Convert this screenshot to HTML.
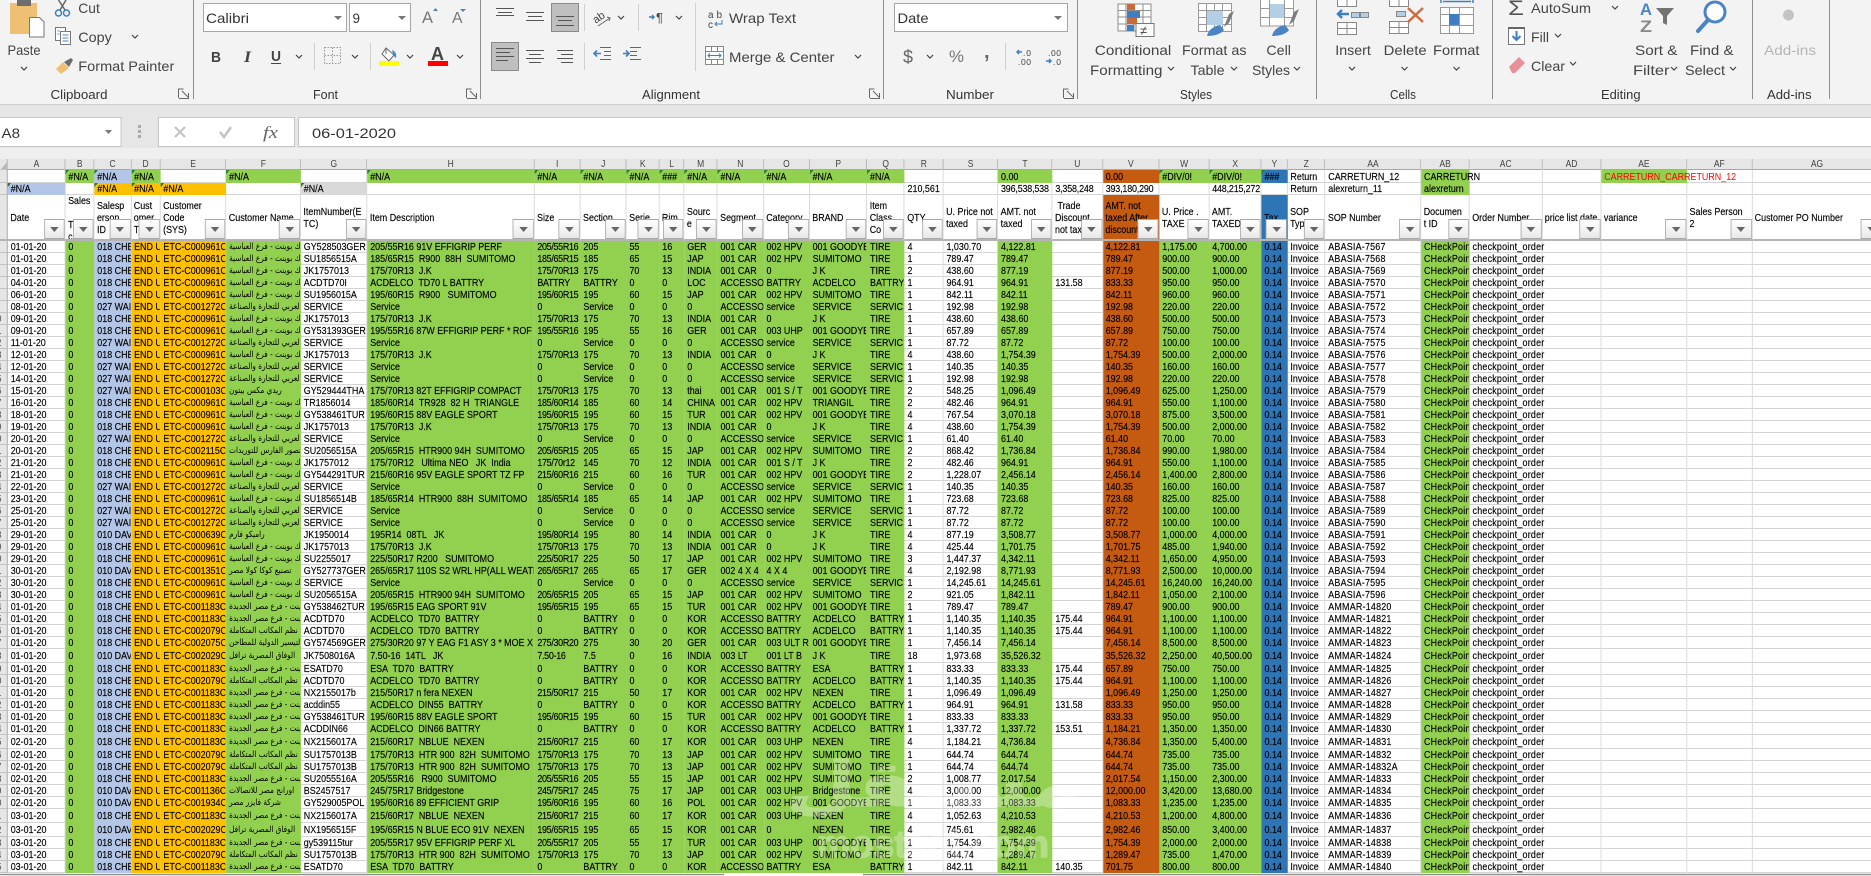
<!DOCTYPE html>
<html><head><meta charset="utf-8"><title>Sheet</title>
<style>
html,body{margin:0;padding:0;width:1871px;height:876px;overflow:hidden;background:#e6e6e6}
svg text{font-family:"Liberation Sans",sans-serif;font-size:14px;fill:#444}
svg .s{font-size:13px;fill:#333}
.rb{position:absolute;left:0;top:0}
.g{position:absolute;left:0;top:159px;transform:scaleX(.85);transform-origin:0 0}
table{border-collapse:separate;border-spacing:0;table-layout:fixed;width:2214.7px;font:10.5px/11px "Liberation Sans","DejaVu Sans",sans-serif;color:#000;background:#fff;-webkit-text-stroke:.15px #000}
td{padding:1px 0 0 3.2px;overflow:hidden;white-space:nowrap;height:12px;box-sizing:border-box;border-right:1px solid #d4d4d4;box-shadow:inset 0 -1px 0 #d4d4d4}
.c td{height:11px;background:#e6e6e6;text-align:center;padding:1px 0 0;color:#444;border-right:1px solid #b0b0b0;box-shadow:inset 0 -1px 0 #a8a8a8;line-height:10px;font-size:10px;-webkit-text-stroke:0}
.c td:first-child{background:linear-gradient(135deg,#e6e6e6 60%,#b5b5b5 60%)}
tr td:first-child{background:#e6e6e6;padding:1px 0 0;text-indent:-4px;color:#555;border-right:1px solid #a0a0a0;box-shadow:inset 0 -1px 0 #c4c4c4;-webkit-text-stroke:0}
.gr{background:#92d050;border-color:transparent;box-shadow:none}
.bl{background:#b4c6e7;border-color:transparent;box-shadow:none}
.am{background:#ffc000;border-color:transparent;box-shadow:none}
.gy{background:#d9d9d9;border-color:transparent;box-shadow:none}
.br{background:#c55a11;border-color:transparent;box-shadow:none}
.dk{background:#2e75b6;border-color:transparent;box-shadow:none}
.n{background-image:linear-gradient(135deg,#2f7d32 3px,transparent 3px);background-repeat:no-repeat}
.o{overflow:visible;position:relative;z-index:3}
.t{letter-spacing:-.2px}
.k td{height:46px;position:relative;padding:0 0 0 2.8px;border-bottom:2px solid #b4b4b4;vertical-align:top;box-shadow:none}
.k td:first-child{padding:0;box-shadow:none}
.x{height:44px;position:relative;top:1px;display:flex;align-items:center;overflow:hidden;line-height:12px;white-space:nowrap}
.tp{align-items:flex-start;top:0}
.f{position:absolute;right:0;bottom:0;width:24.7px;height:20px;box-sizing:border-box;border:1px solid #a8a8a8;background:linear-gradient(#fff,#e8e8e8)}
.f:after{content:"";position:absolute;left:6.5px;top:7px;border-left:5px solid transparent;border-right:5px solid transparent;border-top:5px solid #666}
.d td:nth-child(3),.d td:nth-child(7),.d td:nth-child(n+9):nth-child(-n+18),.d td:nth-child(21),.d td:nth-child(24),.d td:nth-child(25),.d td:nth-child(29){background:#92d050;border-color:transparent;box-shadow:none}
.d td:nth-child(4){background:#b4c6e7;border-color:transparent;box-shadow:none}
.d td:nth-child(5),.d td:nth-child(6){background:#ffc000;border-color:transparent;box-shadow:none}
.d td:nth-child(23){background:#c55a11;border-color:transparent;box-shadow:none}
.d td:nth-child(26){background:#2e75b6;border-color:transparent;box-shadow:none}
.d td:nth-child(7){font-size:8.6px;font-family:"DejaVu Sans",sans-serif;-webkit-text-stroke:0}
.d td:nth-child(10){letter-spacing:-.35px}
.d td:nth-child(28),.d td:nth-child(29),.d td:nth-child(30){letter-spacing:.25px}
.d td:nth-child(30){overflow:visible}
.bot{position:absolute;left:0;top:874px;width:1871px;height:2px;background:#e4e4e4;border-top:1px solid #8f8f8f;box-sizing:border-box}
.tab{position:absolute;left:724px;top:873px;width:139px;height:3px;background:#fff}
.wm{position:absolute;left:0;top:0;pointer-events:none;opacity:.3}
.wm text{fill:#fff;stroke:#fff;stroke-width:1.5px}
</style></head><body>
<svg class="rb" width="1871" height="159" viewBox="0 0 1871 159">
<rect width="1871" height="159" fill="#e6e6e6"/>
<rect width="1871" height="104" fill="#f3f3f3"/>
<rect y="104" width="1871" height="1" fill="#cfcfcf"/>
<rect y="148" width="1871" height="11" fill="#efefef"/>
<g fill="#fff" stroke="#c6c6c6"><rect x="-1" y="117.500" width="122" height="29"/><rect x="158.500" y="117.500" width="136" height="29"/><rect x="298.500" y="117.500" width="1580" height="29"/></g>
<path d="M105 130h7l-3.500 4z" fill="#777"/>
<g fill="#a8a8a8"><rect x="138" y="125" width="3" height="3"/><rect x="138" y="130" width="3" height="3"/><rect x="138" y="135" width="3" height="3"/></g>
<path d="M175 127l10 10m0-10l-10 10" stroke="#c4c4c4" stroke-width="2.200" fill="none"/>
<path d="M220 132l4 5 7-10" stroke="#c4c4c4" stroke-width="2.500" fill="none"/>
<text x="263" y="138" style="font-family:'Liberation Serif',serif;font-style:italic;font-size:17px;fill:#666" textLength="15" lengthAdjust="spacingAndGlyphs">fx</text>
<text x="1.500" y="138" textLength="18.500" lengthAdjust="spacingAndGlyphs" style="fill:#333">A8</text>
<text x="312" y="138" textLength="84" lengthAdjust="spacingAndGlyphs" style="fill:#333">06-01-2020</text>
<g stroke="#8e8e8e" fill="none"><path d="M193.500 0v99M480.500 0v99M883.500 0v99M1077.500 0v99M1316.500 0v99M1492.500 0v99M1752.500 0v99M1829.500 0v99"/></g>
<g stroke="#d0d0d0" fill="none"><path d="M314.500 43v27M370.500 43v27M584.500 4v27M584.500 43v27M638.500 4v27M695.500 3v68M1005.500 43v27"/></g>
<!-- paste -->
<rect x="10" y="3" width="27" height="31" fill="#efbf73"/><rect x="17" y="0" width="14" height="6" fill="#6d6d6d"/>
<path d="M29.500 17.500h10l4.500 4.500v15H29.500z" fill="#fff" stroke="#777"/>
<text x="7.500" y="55" textLength="33" lengthAdjust="spacingAndGlyphs">Paste</text>
<!-- cut -->
<g fill="none"><circle cx="58.500" cy="13" r="3" stroke="#3f7fc1" stroke-width="1.500"/><circle cx="66.500" cy="13" r="3" stroke="#3f7fc1" stroke-width="1.500"/><path d="M60 10L66 0M65 10L58.500 0" stroke="#666" stroke-width="1.500"/></g>
<text x="78.300" y="13" textLength="21.500" lengthAdjust="spacingAndGlyphs">Cut</text>
<!-- copy -->
<rect x="55.500" y="27.500" width="10" height="13" fill="#fff" stroke="#777"/><rect x="60.500" y="31.500" width="10" height="13" fill="#fff" stroke="#777"/>
<path d="M62.500 35h6M62.500 38h6M62.500 41h6M57.500 31h2M57.500 34h2" stroke="#4a84c4" fill="none"/>
<text x="78.300" y="42" textLength="33.500" lengthAdjust="spacingAndGlyphs">Copy</text>
<!-- brush -->
<path d="M56 69l7-7 6 6-8 6z" fill="#efbf73"/><path d="M64 62l7-4 2 2-4 7z" fill="#6d6d6d"/>
<text x="78.300" y="71" textLength="96" lengthAdjust="spacingAndGlyphs">Format Painter</text>
<text class="s" x="50.500" y="99" textLength="57" lengthAdjust="spacingAndGlyphs">Clipboard</text>
<!-- launchers -->
<g fill="none" stroke="#666"><path d="M178.500 98v-9h5M189 98.500h-10M182 91l6 6M188.500 93v5"/><path d="M466.500 98v-9h5M477 98.500h-10M470 91l6 6M476.500 93v5"/><path d="M869.500 98v-9h5M880 98.500h-10M873 91l6 6M879.500 93v5"/><path d="M1063.500 98v-9h5M1074 98.500h-10M1067 91l6 6M1073.500 93v5"/></g>
<!-- chevrons -->
<g fill="none" stroke="#444" stroke-width="1.200"><path d="M132 35l3 3 3-3M21 67l3 3 3-3M618 16l3 3 3-3M676 16l3 3 3-3M296 55l3 3 3-3M352 55l3 3 3-3M407 55l3 3 3-3M457 55l3 3 3-3M855 55l3 3 3-3M927 55l3 3 3-3M1168 67l3 3 3-3M1231 67l3 3 3-3M1294 67l3 3 3-3M1349 67l3 3 3-3M1401.500 67l3 3 3-3M1453.500 67l3 3 3-3M1612 6l3 3 3-3M1555 34l3 3 3-3M1570 62l3 3 3-3M1671 67l3 3 3-3M1730 67l3 3 3-3"/></g>
<!-- font -->
<g fill="#fff" stroke="#a6a6a6"><rect x="203.500" y="3.500" width="143" height="28"/><rect x="349.500" y="3.500" width="61" height="28"/><rect x="894.500" y="3.500" width="173" height="28"/></g>
<path d="M334 16h8l-4 4zM398 16h8l-4 4zM1054 16h8l-4 4z" fill="#777"/>
<text x="206" y="23" textLength="43" lengthAdjust="spacingAndGlyphs" style="fill:#333">Calibri</text>
<text x="352.500" y="23" textLength="7.500" lengthAdjust="spacingAndGlyphs" style="fill:#333">9</text>
<text x="422" y="23" style="font-size:17px;fill:#777" textLength="11" lengthAdjust="spacingAndGlyphs">A</text><path d="M433 11l2.500-3 2.500 3z" fill="#4a84c4"/>
<text x="452" y="23" style="font-size:16px;fill:#777" textLength="10.500" lengthAdjust="spacingAndGlyphs">A</text><path d="M460 9h6l-3 3z" fill="#4a84c4"/>
<text x="211" y="62" style="font-weight:bold;font-size:15px" textLength="10" lengthAdjust="spacingAndGlyphs">B</text>
<text x="244" y="62" style="font-family:'Liberation Serif',serif;font-style:italic;font-weight:bold;font-size:16px" textLength="7" lengthAdjust="spacingAndGlyphs">I</text>
<text x="271" y="61" style="font-weight:bold;font-size:15px" textLength="10" lengthAdjust="spacingAndGlyphs">U</text><rect x="271" y="63" width="10" height="1" fill="#444"/>
<path d="M324.500 47.500h16v16h-16zM332.500 47.500v16M324.500 55.500h16" stroke="#999" stroke-dasharray="1.500 1.500" fill="none"/>
<path d="M386 48l8 7-5 6-7-7zM386 48v6" fill="#fff" stroke="#666"/><path d="M392 50c3 1 5 4 4 8-2-1-3-4-4-8z" fill="#4a84c4"/><rect x="379" y="61" width="20" height="5" fill="#ff0"/>
<text x="431" y="60" style="font-size:18px;font-weight:bold" textLength="13" lengthAdjust="spacingAndGlyphs">A</text><rect x="428" y="61" width="20" height="5" fill="#f00"/>
<text class="s" x="313" y="99" textLength="25" lengthAdjust="spacingAndGlyphs">Font</text>
<!-- alignment -->
<rect x="551.500" y="3.500" width="27" height="28" fill="#bfbfbf" stroke="#8a8a8a"/><rect x="491.500" y="42.500" width="27" height="28" fill="#bfbfbf" stroke="#8a8a8a"/>
<path d="M496 8.500h18M498 12.500h14M496 15.500h18M526 12.500h18M528 16.500h14M526 20.500h18M556 16.500h18M558 20.500h14M556 25.500h18M496 48.500h18M496 52.500h14M496 56.500h18M496 60.500h12M526 50.500h18M529 54.500h12M526 58.500h18M529 62.500h12M557 50.500h16M561 54.500h12M557 58.500h16M561 62.500h12" stroke="#555" fill="none"/>
<text x="592" y="20" style="font-size:11px" transform="rotate(-35 600 16)">ab</text><path d="M598 26l12-8m-3-1l3 1-1 3" stroke="#666" fill="none"/>
<path d="M600 47.500h11M604 51.500h7M604 55.500h7M600 59.500h11M630 47.500h11M630 51.500h7M630 55.500h7M630 59.500h11" stroke="#666" fill="none"/>
<path d="M601 53.500h-7m3-3l-3 3 3 3M623 53.500h6m-3-3l3 3-3 3" stroke="#3f7fc1" stroke-width="1.600" fill="none"/>
<path d="M649 17h5m-2-2l2 2-2 2" stroke="#3f7fc1" stroke-width="1.500" fill="none"/>
<text x="656" y="22" style="font-size:13px">¶</text>
<text x="708" y="18" style="font-size:10px;fill:#444" textLength="14">ab</text><text x="708" y="28" style="font-size:10px;fill:#444">c</text><path d="M722 20v4h-7m2-2l-2 2 2 2" stroke="#3f7fc1" fill="none"/>
<text x="729" y="23" textLength="67" lengthAdjust="spacingAndGlyphs">Wrap Text</text>
<path d="M705.500 46.500h18v18h-18zM705.500 51.500h18M705.500 59.500h18M711.500 46.500v5M717.500 46.500v5M711.500 59.500v5M717.500 59.500v5" stroke="#888" fill="#fff"/><path d="M708 55.500h13m-11-2l-2 2 2 2m9-4l2 2-2 2" stroke="#3f7fc1" fill="none"/>
<text x="729" y="62" textLength="105.500" lengthAdjust="spacingAndGlyphs">Merge &amp; Center</text>
<text class="s" x="642" y="99" textLength="58" lengthAdjust="spacingAndGlyphs">Alignment</text>
<!-- number -->
<text x="897.500" y="23" textLength="31" lengthAdjust="spacingAndGlyphs" style="fill:#333">Date</text>
<text x="903" y="63" style="font-size:18px;fill:#666" textLength="10" lengthAdjust="spacingAndGlyphs">$</text>
<text x="949" y="62" style="font-size:17px;fill:#777" textLength="15" lengthAdjust="spacingAndGlyphs">%</text>
<text x="984" y="58" style="font-size:20px;font-weight:bold;fill:#666">,</text>
<text x="1023" y="56" style="font-size:8.500px" textLength="8">.0</text><text x="1018" y="65" style="font-size:8.500px" textLength="13">.00</text><path d="M1022 52h-5m2-2l-2 2 2 2" stroke="#3f7fc1" stroke-width="1.500" fill="none"/>
<text x="1048" y="56" style="font-size:8.500px" textLength="13">.00</text><text x="1053" y="65" style="font-size:8.500px" textLength="8">.0</text><path d="M1046 61h5m-2-2l2 2-2 2" stroke="#3f7fc1" stroke-width="1.500" fill="none"/>
<text class="s" x="946" y="99" textLength="48" lengthAdjust="spacingAndGlyphs">Number</text>
<!-- cond fmt -->
<path d="M1118 4h33v27h-33zM1118 10.500h33M1118 17h33M1118 24h33M1126 4v27M1134 4v27M1143 4v27" stroke="#8e8e8e" fill="#fff"/>
<rect x="1127" y="4" width="8" height="6" fill="#c86a3a"/><rect x="1127" y="11" width="13" height="7" fill="#3f7fc1"/><rect x="1127" y="18" width="10" height="6" fill="#c86a3a"/><rect x="1127" y="25" width="7" height="6" fill="#3f7fc1"/>
<rect x="1136" y="23.500" width="18" height="13" fill="#fff" stroke="#777"/><text x="1140" y="35" style="font-size:13px">≠</text>
<text x="1094.800" y="55" textLength="76.500" lengthAdjust="spacingAndGlyphs">Conditional</text>
<text x="1090" y="75" textLength="72.500" lengthAdjust="spacingAndGlyphs">Formatting</text>
<!-- fmt table -->
<path d="M1198.500 3.500h33v28h-33zM1198.500 10.500h33M1198.500 17.500h33M1198.500 24.500h33M1206.500 3.500v28M1214.500 3.500v28M1222.500 3.500v28" stroke="#9a9a9a" fill="#fff"/>
<rect x="1207" y="11" width="16" height="14" fill="#b3cfe6"/>
<path d="M1229 14l5-3-5 12-5 4z" fill="#7d7d7d"/><path d="M1207 36c1-6 7-10 13-11l4 5c-3 4-9 6-17 6z" fill="#4a84c4"/>
<text x="1182" y="55" textLength="64.500" lengthAdjust="spacingAndGlyphs">Format as</text>
<text x="1190.500" y="75" textLength="34" lengthAdjust="spacingAndGlyphs">Table</text>
<!-- cell styles -->
<path d="M1260.500 0v26h33v-26M1260.500 8.500h33M1260.500 17.500h33M1269.500 0v26M1284.500 0v26" stroke="#9a9a9a" fill="#fff"/>
<rect x="1270" y="4" width="14" height="14" fill="#b3cfe6"/>
<path d="M1294 12l5-3-5 12-5 4z" fill="#7d7d7d"/><path d="M1272 36c1-6 7-10 13-11l4 5c-3 4-9 6-17 6z" fill="#4a84c4"/>
<text x="1266.400" y="55" textLength="24.500" lengthAdjust="spacingAndGlyphs">Cell</text>
<text x="1252" y="75" textLength="38" lengthAdjust="spacingAndGlyphs">Styles</text>
<text class="s" x="1180" y="99" textLength="32" lengthAdjust="spacingAndGlyphs">Styles</text>
<!-- insert -->
<path d="M1337.500 0v6.500h19v-6.500M1347 0v6.500M1337.500 22.500h19v12h-19zM1337.500 28.500h19M1347 22.500v12" stroke="#888" fill="#fff"/>
<path d="M1349 14h-11m4-4l-4 4 4 4" stroke="#3f7fc1" stroke-width="2.500" fill="none"/>
<rect x="1351.500" y="12.500" width="8" height="5" fill="#b3cfe6" stroke="#888"/><rect x="1360.500" y="12.500" width="8" height="5" fill="#b3cfe6" stroke="#888"/>
<text x="1335.300" y="55" textLength="35.500" lengthAdjust="spacingAndGlyphs">Insert</text>
<!-- delete -->
<path d="M1389.500 0v6.500h19v-6.500M1399 0v6.500M1389.500 21.500h19v12h-19zM1389.500 27.500h19M1399 21.500v12" stroke="#888" fill="#fff"/>
<rect x="1396.500" y="11.500" width="9" height="5" fill="#b3cfe6" stroke="#888"/>
<path d="M1408 8l15 14m0-14l-15 14" stroke="#d06a3a" stroke-width="2.400" fill="none"/>
<text x="1383.700" y="55" textLength="43" lengthAdjust="spacingAndGlyphs">Delete</text>
<!-- format -->
<path d="M1441 3v-3M1473 3v-3M1443 1.500h28" stroke="#3f7fc1" stroke-width="1.500" fill="none"/>
<path d="M1440.500 7.500h33v26h-33zM1440.500 14.500h33M1440.500 25.500h33M1449.500 7.500v26M1459.500 7.500v26" stroke="#999" fill="#fff"/>
<rect x="1449" y="14" width="10" height="11" fill="#3f7fc1"/>
<text x="1433" y="55" textLength="46.500" lengthAdjust="spacingAndGlyphs">Format</text>
<text class="s" x="1390" y="99" textLength="26" lengthAdjust="spacingAndGlyphs">Cells</text>
<!-- editing -->
<text x="1508" y="15" style="font-size:21px;fill:#555" textLength="16" lengthAdjust="spacingAndGlyphs">Σ</text>
<text x="1531" y="13" textLength="60" lengthAdjust="spacingAndGlyphs">AutoSum</text>
<rect x="1508.500" y="27.500" width="16" height="17" fill="#fff" stroke="#777"/><path d="M1516.500 31v9m-4-4l4 4 4-4" stroke="#3f7fc1" stroke-width="2" fill="none"/><rect x="1508" y="27" width="17" height="2" fill="#666"/>
<text x="1531" y="42" textLength="18" lengthAdjust="spacingAndGlyphs">Fill</text>
<path d="M1509 67l10-10 6 6-10 10h-3z" fill="#e8909a"/>
<text x="1531" y="71" textLength="34" lengthAdjust="spacingAndGlyphs">Clear</text>
<text x="1640" y="15" style="font-size:17px;fill:#4a84c4;font-weight:bold" textLength="12" lengthAdjust="spacingAndGlyphs">A</text>
<text x="1640" y="32" style="font-size:17px;fill:#8a8a8a;font-weight:bold" textLength="12" lengthAdjust="spacingAndGlyphs">Z</text>
<path d="M1656 8h18l-7 8v9l-4-2v-7z" fill="#737373"/>
<text x="1635" y="55" textLength="42.500" lengthAdjust="spacingAndGlyphs">Sort &amp;</text>
<text x="1633" y="75" textLength="36.500" lengthAdjust="spacingAndGlyphs">Filter</text>
<circle cx="1715" cy="12" r="10" fill="#fff" stroke="#4a84c4" stroke-width="3"/><path d="M1708 20l-10 11" stroke="#4a84c4" stroke-width="4" stroke-linecap="round"/>
<text x="1690" y="55" textLength="43.500" lengthAdjust="spacingAndGlyphs">Find &amp;</text>
<text x="1685" y="75" textLength="40" lengthAdjust="spacingAndGlyphs">Select</text>
<text class="s" x="1601" y="99" textLength="39.500" lengthAdjust="spacingAndGlyphs">Editing</text>
<circle cx="1788.500" cy="15" r="5.500" fill="#c4c4c4"/>
<text x="1764" y="55" textLength="52" lengthAdjust="spacingAndGlyphs" style="fill:#b5b5b5">Add-ins</text>
<text class="s" x="1767" y="99" textLength="44.500" lengthAdjust="spacingAndGlyphs">Add-ins</text>
</svg>
<div class="g"><table>
<colgroup><col style="width:9.4px"><col style="width:67.9px"><col style="width:34px"><col style="width:43.3px"><col style="width:34.5px"><col style="width:77.3px"><col style="width:87.8px"><col style="width:78.2px"><col style="width:196.6px"><col style="width:54.2px"><col style="width:54.2px"><col style="width:38.6px"><col style="width:29.4px"><col style="width:39.1px"><col style="width:54.2px"><col style="width:54.2px"><col style="width:67.6px"><col style="width:44.1px"><col style="width:45.8px"><col style="width:64.2px"><col style="width:63.9px"><col style="width:59.3px"><col style="width:66.5px"><col style="width:58.8px"><col style="width:61.5px"><col style="width:30.5px"><col style="width:44.5px"><col style="width:112.7px"><col style="width:57.1px"><col style="width:85.4px"><col style="width:69.5px"><col style="width:100.8px"><col style="width:76.6px"><col style="width:153px"></colgroup>
<tbody class="c"><tr><td><td>A<td>B<td>C<td>D<td>E<td>F<td>G<td>H<td>I<td>J<td>K<td>L<td>M<td>N<td>O<td>P<td>Q<td>R<td>S<td>T<td>U<td>V<td>W<td>X<td>Y<td>Z<td>AA<td>AB<td>AC<td>AD<td>AE<td>AF<td>AG</tbody>
<tbody>
<tr style="height:13px"><td><td><td class="gr n">#N/A<td class="bl n">#N/A<td class="gr n">#N/A<td><td class="gr n">#N/A<td><td class="gr n">#N/A<td class="gr n">#N/A<td class="gr n">#N/A<td class="gr n">#N/A<td class="gr n">###<td class="gr n">#N/A<td class="gr n">#N/A<td class="gr n">#N/A<td class="gr n">#N/A<td class="gr n">#N/A<td><td><td class="gr">0.00<td><td class="br">0.00<td class="gr n">#DIV/0!<td class="gr n">#DIV/0!<td class="dk n">###<td>Return<td>CARRETURN_12<td class="gr o">CARRETURN<td><td><td class="gr o" style="color:#f00;-webkit-text-stroke:0">CARRETURN_CARRETURN_12<td><td>
<tr><td><td class="bl n">#N/A<td><td class="am n">#N/A<td class="am n">#N/A<td class="am n">#N/A<td><td class="gy n">#N/A<td><td><td><td><td><td><td><td><td><td><td>210,561<td><td class="t">396,538,538<td class="t">3,358,248<td class="t">393,180,290<td><td class="t">448,215,272<td><td>Return<td>alexreturn_11<td class="gr">alexreturn<td><td><td><td><td>
</tbody>
<tbody class="k"><tr><td><td><div class="x">Date</div><i class="f"></i><td><div class="x tp">Sales<br><br>T<br>c</div><i class="f"></i><td><div class="x">Salesp<br>erson<br>ID</div><i class="f"></i><td><div class="x">Cust<br>omer<br>T</div><i class="f"></i><td><div class="x">Customer<br>Code<br> (SYS)</div><i class="f"></i><td><div class="x">Customer Name</div><i class="f"></i><td><div class="x">ItemNumber(E<br>TC)</div><i class="f"></i><td><div class="x">Item Description</div><i class="f"></i><td><div class="x">Size</div><i class="f"></i><td><div class="x">Section</div><i class="f"></i><td><div class="x">Serie</div><i class="f"></i><td><div class="x">Rim</div><i class="f"></i><td><div class="x">Sourc<br>e</div><i class="f"></i><td><div class="x">Segment</div><i class="f"></i><td><div class="x">Category</div><i class="f"></i><td><div class="x">BRAND</div><i class="f"></i><td><div class="x">Item<br>Class<br>Co</div><i class="f"></i><td><div class="x">QTY</div><i class="f"></i><td><div class="x">U. Price not<br>taxed</div><i class="f"></i><td><div class="x">AMT. not<br>taxed</div><i class="f"></i><td><div class="x">&nbsp;Trade<br>Discount<br>not tax</div><i class="f"></i><td class="br"><div class="x">AMT. not<br>taxed After<br>discount</div><i class="f"></i><td><div class="x">U. Price .<br>TAXE</div><i class="f"></i><td><div class="x">AMT.<br>TAXED</div><i class="f"></i><td class="dk"><div class="x">Tax</div><i class="f"></i><td><div class="x">SOP<br>Typ</div><i class="f"></i><td><div class="x">SOP Number</div><i class="f"></i><td><div class="x">Documen<br>t ID</div><i class="f"></i><td><div class="x">Order Number</div><i class="f"></i><td><div class="x">price list date</div><i class="f"></i><td><div class="x">variance</div><i class="f"></i><td><div class="x">Sales Person<br>2</div><i class="f"></i><td><div class="x">Customer PO Number</div><i class="f"></i></tbody>
<tbody class="d">
<tr><td><td>01-01-20<td>0<td>018 CHECK<td>END USER<td>ETC-C000961C<td>تشيك بوينت - فرع العباسية<td>GY528503GER<td>205/55R16 91V EFFIGRIP PERF<td>205/55R16<td>205<td>55<td>16<td>GER<td>001 CAR<td>002 HPV<td>001 GOODYEAR<td>TIRE<td>4<td>1,030.70<td>4,122.81<td><td>4,122.81<td>1,175.00<td>4,700.00<td>0.14<td>Invoice<td>ABASIA-7567<td>CHeckPoint<td>checkpoint_order<td><td><td><td>
<tr><td><td>01-01-20<td>0<td>018 CHECK<td>END USER<td>ETC-C000961C<td>تشيك بوينت - فرع العباسية<td>SU1856515A<td>185/65R15 &nbsp;R900 &nbsp;88H &nbsp;SUMITOMO<td>185/65R15<td>185<td>65<td>15<td>JAP<td>001 CAR<td>002 HPV<td>SUMITOMO<td>TIRE<td>1<td>789.47<td>789.47<td><td>789.47<td>900.00<td>900.00<td>0.14<td>Invoice<td>ABASIA-7568<td>CHeckPoint<td>checkpoint_order<td><td><td><td>
<tr><td><td>01-01-20<td>0<td>018 CHECK<td>END USER<td>ETC-C000961C<td>تشيك بوينت - فرع العباسية<td>JK1757013<td>175/70R13 &nbsp;J.K<td>175/70R13<td>175<td>70<td>13<td>INDIA<td>001 CAR<td>0<td>J K<td>TIRE<td>2<td>438.60<td>877.19<td><td>877.19<td>500.00<td>1,000.00<td>0.14<td>Invoice<td>ABASIA-7569<td>CHeckPoint<td>checkpoint_order<td><td><td><td>
<tr><td><td>04-01-20<td>0<td>018 CHECK<td>END USER<td>ETC-C000961C<td>تشيك بوينت - فرع العباسية<td>ACDTD70I<td>ACDELCO &nbsp;TD70 L BATTRY<td>BATTRY<td>BATTRY<td>0<td>0<td>LOC<td>ACCESSORIES<td>BATTRY<td>ACDELCO<td>BATTRY<td>1<td>964.91<td>964.91<td>131.58<td>833.33<td>950.00<td>950.00<td>0.14<td>Invoice<td>ABASIA-7570<td>CHeckPoint<td>checkpoint_order<td><td><td><td>
<tr><td><td>06-01-20<td>0<td>018 CHECK<td>END USER<td>ETC-C000961C<td>تشيك بوينت - فرع العباسية<td>SU1956015A<td>195/60R15 &nbsp;R900 &nbsp; SUMITOMO<td>195/60R15<td>195<td>60<td>15<td>JAP<td>001 CAR<td>002 HPV<td>SUMITOMO<td>TIRE<td>1<td>842.11<td>842.11<td><td>842.11<td>960.00<td>960.00<td>0.14<td>Invoice<td>ABASIA-7571<td>CHeckPoint<td>checkpoint_order<td><td><td><td>
<tr><td><td>08-01-20<td>0<td>027 WAIL<td>END USER<td>ETC-C001272C<td>الشركة العربي للتجارة والصناعة<td>SERVICE<td>Service<td>0<td>Service<td>0<td>0<td>0<td>ACCESSORIES<td>service<td>SERVICE<td>SERVICE<td>1<td>192.98<td>192.98<td><td>192.98<td>220.00<td>220.00<td>0.14<td>Invoice<td>ABASIA-7572<td>CHeckPoint<td>checkpoint_order<td><td><td><td>
<tr><td>0<td>09-01-20<td>0<td>018 CHECK<td>END USER<td>ETC-C000961C<td>تشيك بوينت - فرع العباسية<td>JK1757013<td>175/70R13 &nbsp;J.K<td>175/70R13<td>175<td>70<td>13<td>INDIA<td>001 CAR<td>0<td>J K<td>TIRE<td>1<td>438.60<td>438.60<td><td>438.60<td>500.00<td>500.00<td>0.14<td>Invoice<td>ABASIA-7573<td>CHeckPoint<td>checkpoint_order<td><td><td><td>
<tr><td>1<td>09-01-20<td>0<td>018 CHECK<td>END USER<td>ETC-C000961C<td>تشيك بوينت - فرع العباسية<td>GY531393GER<td>195/55R16 87W EFFIGRIP PERF * ROF<td>195/55R16<td>195<td>55<td>16<td>GER<td>001 CAR<td>003 UHP<td>001 GOODYEAR<td>TIRE<td>1<td>657.89<td>657.89<td><td>657.89<td>750.00<td>750.00<td>0.14<td>Invoice<td>ABASIA-7574<td>CHeckPoint<td>checkpoint_order<td><td><td><td>
<tr><td>2<td>11-01-20<td>0<td>027 WAIL<td>END USER<td>ETC-C001272C<td>الشركة العربي للتجارة والصناعة<td>SERVICE<td>Service<td>0<td>Service<td>0<td>0<td>0<td>ACCESSORIES<td>service<td>SERVICE<td>SERVICE<td>1<td>87.72<td>87.72<td><td>87.72<td>100.00<td>100.00<td>0.14<td>Invoice<td>ABASIA-7575<td>CHeckPoint<td>checkpoint_order<td><td><td><td>
<tr><td>3<td>12-01-20<td>0<td>018 CHECK<td>END USER<td>ETC-C000961C<td>تشيك بوينت - فرع العباسية<td>JK1757013<td>175/70R13 &nbsp;J.K<td>175/70R13<td>175<td>70<td>13<td>INDIA<td>001 CAR<td>0<td>J K<td>TIRE<td>4<td>438.60<td>1,754.39<td><td>1,754.39<td>500.00<td>2,000.00<td>0.14<td>Invoice<td>ABASIA-7576<td>CHeckPoint<td>checkpoint_order<td><td><td><td>
<tr><td>4<td>12-01-20<td>0<td>027 WAIL<td>END USER<td>ETC-C001272C<td>الشركة العربي للتجارة والصناعة<td>SERVICE<td>Service<td>0<td>Service<td>0<td>0<td>0<td>ACCESSORIES<td>service<td>SERVICE<td>SERVICE<td>1<td>140.35<td>140.35<td><td>140.35<td>160.00<td>160.00<td>0.14<td>Invoice<td>ABASIA-7577<td>CHeckPoint<td>checkpoint_order<td><td><td><td>
<tr><td>5<td>14-01-20<td>0<td>027 WAIL<td>END USER<td>ETC-C001272C<td>الشركة العربي للتجارة والصناعة<td>SERVICE<td>Service<td>0<td>Service<td>0<td>0<td>0<td>ACCESSORIES<td>service<td>SERVICE<td>SERVICE<td>1<td>192.98<td>192.98<td><td>192.98<td>220.00<td>220.00<td>0.14<td>Invoice<td>ABASIA-7578<td>CHeckPoint<td>checkpoint_order<td><td><td><td>
<tr><td>6<td>15-01-20<td>0<td>027 WAIL<td>END USER<td>ETC-C000103C<td>ريدي مكس بيتون<td>GY529444THA<td>175/70R13 82T EFFIGRIP COMPACT<td>175/70R13<td>175<td>70<td>13<td>thai<td>001 CAR<td>001 S / T<td>001 GOODYEAR<td>TIRE<td>2<td>548.25<td>1,096.49<td><td>1,096.49<td>625.00<td>1,250.00<td>0.14<td>Invoice<td>ABASIA-7579<td>CHeckPoint<td>checkpoint_order<td><td><td><td>
<tr><td>7<td>16-01-20<td>0<td>018 CHECK<td>END USER<td>ETC-C000961C<td>تشيك بوينت - فرع العباسية<td>TR1856014<td>185/60R14 &nbsp;TR928 &nbsp;82 H &nbsp;TRIANGLE<td>185/60R14<td>185<td>60<td>14<td>CHINA<td>001 CAR<td>002 HPV<td>TRIANGIL<td>TIRE<td>2<td>482.46<td>964.91<td><td>964.91<td>550.00<td>1,100.00<td>0.14<td>Invoice<td>ABASIA-7580<td>CHeckPoint<td>checkpoint_order<td><td><td><td>
<tr><td>8<td>18-01-20<td>0<td>018 CHECK<td>END USER<td>ETC-C000961C<td>تشيك بوينت - فرع العباسية<td>GY538461TUR<td>195/60R15 88V EAGLE SPORT<td>195/60R15<td>195<td>60<td>15<td>TUR<td>001 CAR<td>002 HPV<td>001 GOODYEAR<td>TIRE<td>4<td>767.54<td>3,070.18<td><td>3,070.18<td>875.00<td>3,500.00<td>0.14<td>Invoice<td>ABASIA-7581<td>CHeckPoint<td>checkpoint_order<td><td><td><td>
<tr><td>9<td>19-01-20<td>0<td>018 CHECK<td>END USER<td>ETC-C000961C<td>تشيك بوينت - فرع العباسية<td>JK1757013<td>175/70R13 &nbsp;J.K<td>175/70R13<td>175<td>70<td>13<td>INDIA<td>001 CAR<td>0<td>J K<td>TIRE<td>4<td>438.60<td>1,754.39<td><td>1,754.39<td>500.00<td>2,000.00<td>0.14<td>Invoice<td>ABASIA-7582<td>CHeckPoint<td>checkpoint_order<td><td><td><td>
<tr><td>0<td>20-01-20<td>0<td>027 WAIL<td>END USER<td>ETC-C001272C<td>الشركة العربي للتجارة والصناعة<td>SERVICE<td>Service<td>0<td>Service<td>0<td>0<td>0<td>ACCESSORIES<td>service<td>SERVICE<td>SERVICE<td>1<td>61.40<td>61.40<td><td>61.40<td>70.00<td>70.00<td>0.14<td>Invoice<td>ABASIA-7583<td>CHeckPoint<td>checkpoint_order<td><td><td><td>
<tr><td>1<td>20-01-20<td>0<td>018 CHECK<td>END USER<td>ETC-C002115C<td>تصور الفارس للتوريدات<td>SU2056515A<td>205/65R15 &nbsp;HTR900 94H &nbsp;SUMITOMO<td>205/65R15<td>205<td>65<td>15<td>JAP<td>001 CAR<td>002 HPV<td>SUMITOMO<td>TIRE<td>2<td>868.42<td>1,736.84<td><td>1,736.84<td>990.00<td>1,980.00<td>0.14<td>Invoice<td>ABASIA-7584<td>CHeckPoint<td>checkpoint_order<td><td><td><td>
<tr><td>2<td>21-01-20<td>0<td>018 CHECK<td>END USER<td>ETC-C000961C<td>تشيك بوينت - فرع العباسية<td>JK1757012<td>175/70R12 &nbsp; Ultima NEO &nbsp; JK &nbsp;India<td>175/70r12<td>145<td>70<td>12<td>INDIA<td>001 CAR<td>001 S / T<td>J K<td>TIRE<td>2<td>482.46<td>964.91<td><td>964.91<td>550.00<td>1,100.00<td>0.14<td>Invoice<td>ABASIA-7585<td>CHeckPoint<td>checkpoint_order<td><td><td><td>
<tr><td>3<td>21-01-20<td>0<td>018 CHECK<td>END USER<td>ETC-C000961C<td>تشيك بوينت - فرع العباسية<td>GY544291TUR<td>215/60R16 95V EAGLE SPORT TZ FP<td>215/60R16<td>215<td>60<td>16<td>TUR<td>001 CAR<td>002 HPV<td>001 GOODYEAR<td>TIRE<td>2<td>1,228.07<td>2,456.14<td><td>2,456.14<td>1,400.00<td>2,800.00<td>0.14<td>Invoice<td>ABASIA-7586<td>CHeckPoint<td>checkpoint_order<td><td><td><td>
<tr><td>4<td>22-01-20<td>0<td>027 WAIL<td>END USER<td>ETC-C001272C<td>الشركة العربي للتجارة والصناعة<td>SERVICE<td>Service<td>0<td>Service<td>0<td>0<td>0<td>ACCESSORIES<td>service<td>SERVICE<td>SERVICE<td>1<td>140.35<td>140.35<td><td>140.35<td>160.00<td>160.00<td>0.14<td>Invoice<td>ABASIA-7587<td>CHeckPoint<td>checkpoint_order<td><td><td><td>
<tr><td>5<td>23-01-20<td>0<td>018 CHECK<td>END USER<td>ETC-C000961C<td>تشيك بوينت - فرع العباسية<td>SU1856514B<td>185/65R14 &nbsp;HTR900 &nbsp;88H &nbsp;SUMITOMO<td>185/65R14<td>185<td>65<td>14<td>JAP<td>001 CAR<td>002 HPV<td>SUMITOMO<td>TIRE<td>1<td>723.68<td>723.68<td><td>723.68<td>825.00<td>825.00<td>0.14<td>Invoice<td>ABASIA-7588<td>CHeckPoint<td>checkpoint_order<td><td><td><td>
<tr><td>6<td>25-01-20<td>0<td>027 WAIL<td>END USER<td>ETC-C001272C<td>الشركة العربي للتجارة والصناعة<td>SERVICE<td>Service<td>0<td>Service<td>0<td>0<td>0<td>ACCESSORIES<td>service<td>SERVICE<td>SERVICE<td>1<td>87.72<td>87.72<td><td>87.72<td>100.00<td>100.00<td>0.14<td>Invoice<td>ABASIA-7589<td>CHeckPoint<td>checkpoint_order<td><td><td><td>
<tr><td>7<td>25-01-20<td>0<td>027 WAIL<td>END USER<td>ETC-C001272C<td>الشركة العربي للتجارة والصناعة<td>SERVICE<td>Service<td>0<td>Service<td>0<td>0<td>0<td>ACCESSORIES<td>service<td>SERVICE<td>SERVICE<td>1<td>87.72<td>87.72<td><td>87.72<td>100.00<td>100.00<td>0.14<td>Invoice<td>ABASIA-7590<td>CHeckPoint<td>checkpoint_order<td><td><td><td>
<tr><td>8<td>29-01-20<td>0<td>010 DAVID<td>END USER<td>ETC-C000639C<td>راميكو فارم<td>JK1950014<td>195R14 &nbsp;08TL &nbsp; JK<td>195/80R14<td>195<td>80<td>14<td>INDIA<td>001 CAR<td>0<td>J K<td>TIRE<td>4<td>877.19<td>3,508.77<td><td>3,508.77<td>1,000.00<td>4,000.00<td>0.14<td>Invoice<td>ABASIA-7591<td>CHeckPoint<td>checkpoint_order<td><td><td><td>
<tr><td>9<td>29-01-20<td>0<td>018 CHECK<td>END USER<td>ETC-C000961C<td>تشيك بوينت - فرع العباسية<td>JK1757013<td>175/70R13 &nbsp;J.K<td>175/70R13<td>175<td>70<td>13<td>INDIA<td>001 CAR<td>0<td>J K<td>TIRE<td>4<td>425.44<td>1,701.75<td><td>1,701.75<td>485.00<td>1,940.00<td>0.14<td>Invoice<td>ABASIA-7592<td>CHeckPoint<td>checkpoint_order<td><td><td><td>
<tr><td>0<td>29-01-20<td>0<td>018 CHECK<td>END USER<td>ETC-C000961C<td>تشيك بوينت - فرع العباسية<td>SU2255017<td>225/50R17 R200 &nbsp; SUMITOMO<td>225/50R17<td>225<td>50<td>17<td>JAP<td>001 CAR<td>002 HPV<td>SUMITOMO<td>TIRE<td>3<td>1,447.37<td>4,342.11<td><td>4,342.11<td>1,650.00<td>4,950.00<td>0.14<td>Invoice<td>ABASIA-7593<td>CHeckPoint<td>checkpoint_order<td><td><td><td>
<tr><td>1<td>30-01-20<td>0<td>010 DAVID<td>END USER<td>ETC-C001351C<td>تصنيع كوكا كولا مصر<td>GY527737GER<td>265/65R17 110S S2 WRL HP(ALL WEATHER<td>265/65R17<td>265<td>65<td>17<td>GER<td>002 4 X 4<td>4 X 4<td>001 GOODYEAR<td>TIRE<td>4<td>2,192.98<td>8,771.93<td><td>8,771.93<td>2,500.00<td>10,000.00<td>0.14<td>Invoice<td>ABASIA-7594<td>CHeckPoint<td>checkpoint_order<td><td><td><td>
<tr><td>2<td>30-01-20<td>0<td>018 CHECK<td>END USER<td>ETC-C000961C<td>تشيك بوينت - فرع العباسية<td>SERVICE<td>Service<td>0<td>Service<td>0<td>0<td>0<td>ACCESSORIES<td>service<td>SERVICE<td>SERVICE<td>1<td>14,245.61<td>14,245.61<td><td>14,245.61<td>16,240.00<td>16,240.00<td>0.14<td>Invoice<td>ABASIA-7595<td>CHeckPoint<td>checkpoint_order<td><td><td><td>
<tr><td>3<td>30-01-20<td>0<td>018 CHECK<td>END USER<td>ETC-C000961C<td>تشيك بوينت - فرع العباسية<td>SU2056515A<td>205/65R15 &nbsp;HTR900 94H &nbsp;SUMITOMO<td>205/65R15<td>205<td>65<td>15<td>JAP<td>001 CAR<td>002 HPV<td>SUMITOMO<td>TIRE<td>2<td>921.05<td>1,842.11<td><td>1,842.11<td>1,050.00<td>2,100.00<td>0.14<td>Invoice<td>ABASIA-7596<td>CHeckPoint<td>checkpoint_order<td><td><td><td>
<tr><td>4<td>01-01-20<td>0<td>018 CHECK<td>END USER<td>ETC-C001183C<td>تشيك بوينت - فرع مصر الجديدة<td>GY538462TUR<td>195/65R15 EAG SPORT 91V<td>195/65R15<td>195<td>65<td>15<td>TUR<td>001 CAR<td>002 HPV<td>001 GOODYEAR<td>TIRE<td>1<td>789.47<td>789.47<td><td>789.47<td>900.00<td>900.00<td>0.14<td>Invoice<td>AMMAR-14820<td>CHeckPoint<td>checkpoint_order<td><td><td><td>
<tr><td>5<td>01-01-20<td>0<td>018 CHECK<td>END USER<td>ETC-C001183C<td>تشيك بوينت - فرع مصر الجديدة<td>ACDTD70<td>ACDELCO &nbsp;TD70 &nbsp;BATTRY<td>0<td>BATTRY<td>0<td>0<td>KOR<td>ACCESSORIES<td>BATTRY<td>ACDELCO<td>BATTRY<td>1<td>1,140.35<td>1,140.35<td>175.44<td>964.91<td>1,100.00<td>1,100.00<td>0.14<td>Invoice<td>AMMAR-14821<td>CHeckPoint<td>checkpoint_order<td><td><td><td>
<tr><td>6<td>01-01-20<td>0<td>018 CHECK<td>END USER<td>ETC-C002079C<td>نظم المكاتب المتكاملة<td>ACDTD70<td>ACDELCO &nbsp;TD70 &nbsp;BATTRY<td>0<td>BATTRY<td>0<td>0<td>KOR<td>ACCESSORIES<td>BATTRY<td>ACDELCO<td>BATTRY<td>1<td>1,140.35<td>1,140.35<td>175.44<td>964.91<td>1,100.00<td>1,100.00<td>0.14<td>Invoice<td>AMMAR-14822<td>CHeckPoint<td>checkpoint_order<td><td><td><td>
<tr><td>7<td>01-01-20<td>0<td>018 CHECK<td>END USER<td>ETC-C002075C<td>التيسير الدولية للمطاحن<td>GY574569GER<td>275/30R20 97 Y EAG F1 ASY 3 * MOE X<td>275/30R20<td>275<td>30<td>20<td>GER<td>001 CAR<td>003 ULT R<td>001 GOODYEAR<td>TIRE<td>1<td>7,456.14<td>7,456.14<td><td>7,456.14<td>8,500.00<td>8,500.00<td>0.14<td>Invoice<td>AMMAR-14823<td>CHeckPoint<td>checkpoint_order<td><td><td><td>
<tr style="height:14px"><td>8<td>01-01-20<td>0<td>010 DAVID<td>END USER<td>ETC-C002029C<td>الوفاق المصرية ترافل<td>JK7508016A<td>7.50-16 &nbsp;14TL &nbsp; JK<td>7.50-16<td>7.5<td>0<td>16<td>INDIA<td>003 LT<td>001 LT B<td>J K<td>TIRE<td>18<td>1,973.68<td>35,526.32<td><td>35,526.32<td>2,250.00<td>40,500.00<td>0.14<td>Invoice<td>AMMAR-14824<td>CHeckPoint<td>checkpoint_order<td><td><td><td>
<tr><td>9<td>01-01-20<td>0<td>018 CHECK<td>END USER<td>ETC-C001183C<td>تشيك بوينت - فرع مصر الجديدة<td>ESATD70<td>ESA &nbsp;TD70 &nbsp;BATTRY<td>0<td>BATTRY<td>0<td>0<td>KOR<td>ACCESSORIES<td>BATTRY<td>ESA<td>BATTRY<td>1<td>833.33<td>833.33<td>175.44<td>657.89<td>750.00<td>750.00<td>0.14<td>Invoice<td>AMMAR-14825<td>CHeckPoint<td>checkpoint_order<td><td><td><td>
<tr><td>0<td>01-01-20<td>0<td>018 CHECK<td>END USER<td>ETC-C002079C<td>نظم المكاتب المتكاملة<td>ACDTD70<td>ACDELCO &nbsp;TD70 &nbsp;BATTRY<td>0<td>BATTRY<td>0<td>0<td>KOR<td>ACCESSORIES<td>BATTRY<td>ACDELCO<td>BATTRY<td>1<td>1,140.35<td>1,140.35<td>175.44<td>964.91<td>1,100.00<td>1,100.00<td>0.14<td>Invoice<td>AMMAR-14826<td>CHeckPoint<td>checkpoint_order<td><td><td><td>
<tr><td>1<td>01-01-20<td>0<td>018 CHECK<td>END USER<td>ETC-C001183C<td>تشيك بوينت - فرع مصر الجديدة<td>NX2155017b<td>215/50R17 n fera NEXEN<td>215/50R17<td>215<td>50<td>17<td>KOR<td>001 CAR<td>002 HPV<td>NEXEN<td>TIRE<td>1<td>1,096.49<td>1,096.49<td><td>1,096.49<td>1,250.00<td>1,250.00<td>0.14<td>Invoice<td>AMMAR-14827<td>CHeckPoint<td>checkpoint_order<td><td><td><td>
<tr><td>2<td>01-01-20<td>0<td>018 CHECK<td>END USER<td>ETC-C001183C<td>تشيك بوينت - فرع مصر الجديدة<td>acddin55<td>ACDELCO &nbsp;DIN55 &nbsp;BATTRY<td>0<td>BATTRY<td>0<td>0<td>KOR<td>ACCESSORIES<td>BATTRY<td>ACDELCO<td>BATTRY<td>1<td>964.91<td>964.91<td>131.58<td>833.33<td>950.00<td>950.00<td>0.14<td>Invoice<td>AMMAR-14828<td>CHeckPoint<td>checkpoint_order<td><td><td><td>
<tr><td>3<td>01-01-20<td>0<td>018 CHECK<td>END USER<td>ETC-C001183C<td>تشيك بوينت - فرع مصر الجديدة<td>GY538461TUR<td>195/60R15 88V EAGLE SPORT<td>195/60R15<td>195<td>60<td>15<td>TUR<td>001 CAR<td>002 HPV<td>001 GOODYEAR<td>TIRE<td>1<td>833.33<td>833.33<td><td>833.33<td>950.00<td>950.00<td>0.14<td>Invoice<td>AMMAR-14829<td>CHeckPoint<td>checkpoint_order<td><td><td><td>
<tr><td>4<td>01-01-20<td>0<td>018 CHECK<td>END USER<td>ETC-C001183C<td>تشيك بوينت - فرع مصر الجديدة<td>ACDDIN66<td>ACDELCO &nbsp;DIN66 BATTRY<td>0<td>BATTRY<td>0<td>0<td>KOR<td>ACCESSORIES<td>BATTRY<td>ACDELCO<td>BATTRY<td>1<td>1,337.72<td>1,337.72<td>153.51<td>1,184.21<td>1,350.00<td>1,350.00<td>0.14<td>Invoice<td>AMMAR-14830<td>CHeckPoint<td>checkpoint_order<td><td><td><td>
<tr style="height:14px"><td>5<td>02-01-20<td>0<td>018 CHECK<td>END USER<td>ETC-C001183C<td>تشيك بوينت - فرع مصر الجديدة<td>NX2156017A<td>215/60R17 &nbsp;NBLUE &nbsp;NEXEN<td>215/60R17<td>215<td>60<td>17<td>KOR<td>001 CAR<td>003 UHP<td>NEXEN<td>TIRE<td>4<td>1,184.21<td>4,736.84<td><td>4,736.84<td>1,350.00<td>5,400.00<td>0.14<td>Invoice<td>AMMAR-14831<td>CHeckPoint<td>checkpoint_order<td><td><td><td>
<tr><td>6<td>02-01-20<td>0<td>018 CHECK<td>END USER<td>ETC-C002079C<td>نظم المكاتب المتكاملة<td>SU1757013B<td>175/70R13 &nbsp;HTR 900 &nbsp;82H &nbsp;SUMITOMO<td>175/70R13<td>175<td>70<td>13<td>JAP<td>001 CAR<td>002 HPV<td>SUMITOMO<td>TIRE<td>1<td>644.74<td>644.74<td><td>644.74<td>735.00<td>735.00<td>0.14<td>Invoice<td>AMMAR-14832<td>CHeckPoint<td>checkpoint_order<td><td><td><td>
<tr><td>7<td>02-01-20<td>0<td>018 CHECK<td>END USER<td>ETC-C002079C<td>نظم المكاتب المتكاملة<td>SU1757013B<td>175/70R13 &nbsp;HTR 900 &nbsp;82H &nbsp;SUMITOMO<td>175/70R13<td>175<td>70<td>13<td>JAP<td>001 CAR<td>002 HPV<td>SUMITOMO<td>TIRE<td>1<td>644.74<td>644.74<td><td>644.74<td>735.00<td>735.00<td>0.14<td>Invoice<td>AMMAR-14832A<td>CHeckPoint<td>checkpoint_order<td><td><td><td>
<tr><td>8<td>02-01-20<td>0<td>018 CHECK<td>END USER<td>ETC-C001183C<td>تشيك بوينت - فرع مصر الجديدة<td>SU2055516A<td>205/55R16 &nbsp; R900 &nbsp;SUMITOMO<td>205/55R16<td>205<td>55<td>15<td>JAP<td>001 CAR<td>002 HPV<td>SUMITOMO<td>TIRE<td>2<td>1,008.77<td>2,017.54<td><td>2,017.54<td>1,150.00<td>2,300.00<td>0.14<td>Invoice<td>AMMAR-14833<td>CHeckPoint<td>checkpoint_order<td><td><td><td>
<tr><td>9<td>02-01-20<td>0<td>010 DAVID<td>END USER<td>ETC-C001136C<td>اورانج مصر للاتصالات<td>BS2457517<td>245/75R17 Bridgestone<td>245/75R17<td>245<td>75<td>17<td>JAP<td>001 CAR<td>003 UHP<td>Bridgestone<td>TIRE<td>4<td>3,000.00<td>12,000.00<td><td>12,000.00<td>3,420.00<td>13,680.00<td>0.14<td>Invoice<td>AMMAR-14834<td>CHeckPoint<td>checkpoint_order<td><td><td><td>
<tr><td>0<td>02-01-20<td>0<td>010 DAVID<td>END USER<td>ETC-C001934C<td>شركة فايزر مصر<td>GY529005POL<td>195/60R16 89 EFFICIENT GRIP<td>195/60R16<td>195<td>60<td>16<td>POL<td>001 CAR<td>002 HPV<td>001 GOODYEAR<td>TIRE<td>1<td>1,083.33<td>1,083.33<td><td>1,083.33<td>1,235.00<td>1,235.00<td>0.14<td>Invoice<td>AMMAR-14835<td>CHeckPoint<td>checkpoint_order<td><td><td><td>
<tr style="height:14px"><td>1<td>03-01-20<td>0<td>018 CHECK<td>END USER<td>ETC-C001183C<td>تشيك بوينت - فرع مصر الجديدة<td>NX2156017A<td>215/60R17 &nbsp;NBLUE &nbsp;NEXEN<td>215/60R17<td>215<td>60<td>17<td>KOR<td>001 CAR<td>003 UHP<td>NEXEN<td>TIRE<td>4<td>1,052.63<td>4,210.53<td><td>4,210.53<td>1,200.00<td>4,800.00<td>0.14<td>Invoice<td>AMMAR-14836<td>CHeckPoint<td>checkpoint_order<td><td><td><td>
<tr style="height:14px"><td>2<td>03-01-20<td>0<td>010 DAVID<td>END USER<td>ETC-C002029C<td>الوفاق المصرية ترافل<td>NX1956515F<td>195/65R15 N BLUE ECO 91V &nbsp;NEXEN<td>195/65R15<td>195<td>65<td>15<td>KOR<td>001 CAR<td>0<td>NEXEN<td>TIRE<td>4<td>745.61<td>2,982.46<td><td>2,982.46<td>850.00<td>3,400.00<td>0.14<td>Invoice<td>AMMAR-14837<td>CHeckPoint<td>checkpoint_order<td><td><td><td>
<tr><td>3<td>03-01-20<td>0<td>018 CHECK<td>END USER<td>ETC-C001183C<td>تشيك بوينت - فرع مصر الجديدة<td>gy539115tur<td>205/55R17 95V EFFIGRIP PERF XL<td>205/55R17<td>205<td>55<td>17<td>TUR<td>001 CAR<td>003 UHP<td>001 GOODYEAR<td>TIRE<td>1<td>1,754.39<td>1,754.39<td><td>1,754.39<td>2,000.00<td>2,000.00<td>0.14<td>Invoice<td>AMMAR-14838<td>CHeckPoint<td>checkpoint_order<td><td><td><td>
<tr><td>4<td>03-01-20<td>0<td>018 CHECK<td>END USER<td>ETC-C002079C<td>نظم المكاتب المتكاملة<td>SU1757013B<td>175/70R13 &nbsp;HTR 900 &nbsp;82H &nbsp;SUMITOMO<td>175/70R13<td>175<td>70<td>13<td>JAP<td>001 CAR<td>002 HPV<td>SUMITOMO<td>TIRE<td>2<td>644.74<td>1,289.47<td><td>1,289.47<td>735.00<td>1,470.00<td>0.14<td>Invoice<td>AMMAR-14839<td>CHeckPoint<td>checkpoint_order<td><td><td><td>
<tr><td>5<td>03-01-20<td>0<td>018 CHECK<td>END USER<td>ETC-C001183C<td>تشيك بوينت - فرع مصر الجديدة<td>ESATD70<td>ESA &nbsp;TD70 &nbsp;BATTRY<td>0<td>BATTRY<td>0<td>0<td>KOR<td>ACCESSORIES<td>BATTRY<td>ESA<td>BATTRY<td>1<td>842.11<td>842.11<td>140.35<td>701.75<td>800.00<td>800.00<td>0.14<td>Invoice<td>AMMAR-14840<td>CHeckPoint<td>checkpoint_order<td><td><td><td>
</tbody></table></div>
<div class="bot"></div><div class="tab"></div>
<svg class="wm" width="1871" height="876" viewBox="0 0 1871 876">
<text transform="translate(933 806) scale(1.3 1)" text-anchor="middle" style="font-family:'DejaVu Sans',sans-serif;font-size:62px;font-weight:bold">مستقل</text>
<text x="817" y="857" textLength="232" lengthAdjust="spacingAndGlyphs" style="font-family:'Liberation Sans',sans-serif;font-size:38px;font-weight:bold">mostaql.com</text>
</svg>
</body></html>
